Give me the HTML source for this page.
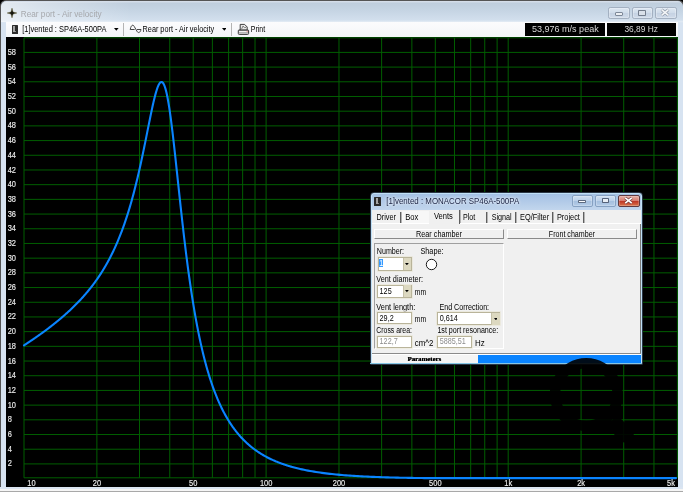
<!DOCTYPE html><html><head><meta charset="utf-8"><title>Rear port - Air velocity</title><style>html,body{margin:0;padding:0}body{width:683px;height:492px;overflow:hidden;position:relative;background:#000;font-family:"Liberation Sans",sans-serif}
#root{position:absolute;left:0;top:0;width:683px;height:492px;will-change:transform;}
.t{position:absolute;white-space:pre;line-height:1;transform-origin:0 0;}</style></head><body><div id="root">
<div style="position:absolute;left:0.00px;top:0.00px;width:684.00px;height:492.00px;box-sizing:border-box;border:1px solid #555;border-bottom:none;border-radius:6px 6px 0 0;background:linear-gradient(#d6dfea 0,#d3dce8 1px,#bfcedd 2px,#c6d5e4 10px,#d2dfed 19px,#e0e9f3 20.5px,#d7e3f1 22px,#d7e3f1 100%);"></div>
<div style="position:absolute;left:1.00px;top:1.50px;width:140.00px;height:20.00px;background:linear-gradient(to right,rgba(255,255,255,0.55),rgba(255,255,255,0.35) 40px,rgba(255,255,255,0) 130px);border-radius:5px 0 0 0"></div>
<div style="position:absolute;left:0.00px;top:487.00px;width:683.00px;height:2.00px;background:#dbe5f1"></div>
<div style="position:absolute;left:0.00px;top:489.00px;width:683.00px;height:2.20px;background:#f5f5f5"></div>
<div style="position:absolute;left:0.00px;top:491.20px;width:683.00px;height:0.80px;background:#a8a8a8"></div>
<svg style="position:absolute;left:7.1px;top:7.9px" width="10" height="10" viewBox="-5 -5 10 10"><path d="M0,-4.9 L1,-1 L4.9,0 L1,1 L0,4.9 L-1,1 L-4.9,0 L-1,-1Z" fill="#1b1b12" stroke="#5f5a2a" stroke-width="0.4"/><circle r="1.5" fill="#15150f"/></svg>
<span class="t" style="left:20px;top:9px;font-size:8.3px;color:#a6a8ac;transform:translate(0.70px,0.97px) scaleX(0.9923);">Rear port - Air velocity</span>
<div style="position:absolute;left:608.30px;top:7.20px;width:21.50px;height:12.30px;box-sizing:border-box;border:0.9px solid #a3b0c1;border-radius:2.2px;background:linear-gradient(#dde7f2,#d0dcea 48%,#c5d2e3 52%,#d0dbe9);box-shadow:0 0 0 0.6px rgba(255,255,255,0.45) inset;"></div><div style="position:absolute;left:614.80px;top:12.00px;width:8.30px;height:3.80px;box-sizing:border-box;border:0.9px solid #7d8898;background:#eceff3;border-radius:1px"></div>
<div style="position:absolute;left:631.80px;top:7.20px;width:21.30px;height:12.30px;box-sizing:border-box;border:0.9px solid #a3b0c1;border-radius:2.2px;background:linear-gradient(#dde7f2,#d0dcea 48%,#c5d2e3 52%,#d0dbe9);box-shadow:0 0 0 0.6px rgba(255,255,255,0.45) inset;"></div><div style="position:absolute;left:638.30px;top:9.70px;width:7.90px;height:5.90px;box-sizing:border-box;border:1.5px solid #737d8c;background:#d9e0e9;border-radius:0.9px"></div>
<div style="position:absolute;left:655.30px;top:7.20px;width:21.50px;height:12.30px;box-sizing:border-box;border:0.9px solid #a3b0c1;border-radius:2.2px;background:linear-gradient(#dde7f2,#d0dcea 48%,#c5d2e3 52%,#d0dbe9);box-shadow:0 0 0 0.6px rgba(255,255,255,0.45) inset;"></div><svg style="position:absolute;left:660.2px;top:8.15px" width="10" height="9" viewBox="0 0 10 9"><path d="M1.6,1.7 L8.4,7.3 M8.4,1.7 L1.6,7.3" stroke="#8e98a6" stroke-width="3"/><path d="M1.6,1.7 L8.4,7.3 M8.4,1.7 L1.6,7.3" stroke="#f4f6f8" stroke-width="1.6"/></svg>
<div style="position:absolute;left:6.00px;top:21.50px;width:671.80px;height:15.60px;background:linear-gradient(#fcfcfd,#f3f5f8);"></div>
<div style="position:absolute;left:11.90px;top:25.00px;width:6.10px;height:8.80px;background:#2c2c2c;border-radius:0.5px"><div style="position:absolute;left:1.10px;top:1.10px;width:1.90px;height:5.60px;background:#a4a4a4"></div><div style="position:absolute;left:3.50px;top:5.60px;width:1.00px;height:1.30px;background:#8a8a8a"></div></div>
<span class="t" style="left:22px;top:25px;font-size:8.3px;color:#000;transform:translate(0.20px,0.07px) scaleX(0.8962);">[1]vented : SP46A-500PA</span>
<svg style="position:absolute;left:114.3px;top:28.2px" width="4.6" height="3" viewBox="0 0 4.6 3"><path d="M0,0H4.6L2.3,2.8Z" fill="#000"/></svg>
<div style="position:absolute;left:123.30px;top:23.30px;width:0.80px;height:12.50px;background:#b4b4b4"></div>
<svg style="position:absolute;left:0;top:0" width="683" height="45" viewBox="0 0 683 45"><path d="M130.2,29.5 C131.2,24.6 133.2,24.2 134.3,26.6 L137.2,31.6 C138.2,33.2 140.2,33 141,29.5 M130.2,29.5 H134.6 M137,29.5 H141" fill="none" stroke="#3c3c3c" stroke-width="0.95" stroke-linejoin="round"/><path d="M240.2,29.8 V24.4 H244.6 L247.2,27 V29.8" fill="#e9e9e9" stroke="#2a2a2a" stroke-width="0.9"/><path d="M241.6,29 L243,26 L244.4,27.6 L246,27.4" fill="none" stroke="#666" stroke-width="0.8"/><rect x="238.3" y="29.9" width="10.3" height="4.5" rx="0.9" fill="#fff" stroke="#2a2a2a" stroke-width="0.95"/><path d="M239,32.9 H248" stroke="#777" stroke-width="0.9"/><path d="M239,30.6 H248" stroke="#444" stroke-width="0.7"/><rect x="246.6" y="30.9" width="1.2" height="0.9" fill="#f08080"/></svg>
<span class="t" style="left:142px;top:25px;font-size:8.3px;color:#000;transform:translate(0.60px,0.07px) scaleX(0.8760);">Rear port - Air velocity</span>
<svg style="position:absolute;left:221.6px;top:28.2px" width="4.6" height="3" viewBox="0 0 4.6 3"><path d="M0,0H4.6L2.3,2.8Z" fill="#000"/></svg>
<div style="position:absolute;left:231.20px;top:23.30px;width:0.80px;height:12.50px;background:#b4b4b4"></div>
<span class="t" style="left:250px;top:25px;font-size:8.3px;color:#000;transform:translate(0.80px,0.07px) scaleX(0.8440);">Print</span>
<div style="position:absolute;left:525.20px;top:23.20px;width:79.60px;height:12.40px;background:#000"></div>
<div style="position:absolute;left:607.10px;top:23.20px;width:68.60px;height:12.40px;background:#000"></div>
<span class="t" style="left:531px;top:25px;font-size:9px;color:#d8d8d8;transform:translate(0.90px,0.08px) scaleX(1.0038);">53,976 m/s peak</span>
<span class="t" style="left:624px;top:25px;font-size:9px;color:#d8d8d8;transform:translate(0.40px,0.08px) scaleX(0.9297);">36,89 Hz</span>
<div style="position:absolute;left:6.00px;top:37.00px;width:672.00px;height:450.00px;background:#000"></div>
<svg width="683" height="492" viewBox="0 0 683 492" style="position:absolute;left:0;top:0"><g stroke="#005e00" stroke-width="1.0" fill="none"><line x1="24.00" y1="37.8" x2="24.00" y2="477.8"/><line x1="96.88" y1="37.8" x2="96.88" y2="477.8"/><line x1="139.51" y1="37.8" x2="139.51" y2="477.8"/><line x1="169.76" y1="37.8" x2="169.76" y2="477.8"/><line x1="193.22" y1="37.8" x2="193.22" y2="477.8"/><line x1="212.39" y1="37.8" x2="212.39" y2="477.8"/><line x1="228.60" y1="37.8" x2="228.60" y2="477.8"/><line x1="242.64" y1="37.8" x2="242.64" y2="477.8"/><line x1="255.02" y1="37.8" x2="255.02" y2="477.8"/><line x1="266.10" y1="37.8" x2="266.10" y2="477.8"/><line x1="338.98" y1="37.8" x2="338.98" y2="477.8"/><line x1="381.61" y1="37.8" x2="381.61" y2="477.8"/><line x1="411.86" y1="37.8" x2="411.86" y2="477.8"/><line x1="435.32" y1="37.8" x2="435.32" y2="477.8"/><line x1="454.49" y1="37.8" x2="454.49" y2="477.8"/><line x1="470.70" y1="37.8" x2="470.70" y2="477.8"/><line x1="484.74" y1="37.8" x2="484.74" y2="477.8"/><line x1="497.12" y1="37.8" x2="497.12" y2="477.8"/><line x1="508.20" y1="37.8" x2="508.20" y2="477.8"/><line x1="581.08" y1="37.8" x2="581.08" y2="477.8"/><line x1="623.71" y1="37.8" x2="623.71" y2="477.8"/><line x1="653.96" y1="37.8" x2="653.96" y2="477.8"/><line x1="677.42" y1="37.8" x2="677.42" y2="477.8"/><line x1="24.00" y1="463.92" x2="677.42" y2="463.92"/><line x1="24.00" y1="449.22" x2="677.42" y2="449.22"/><line x1="24.00" y1="434.52" x2="677.42" y2="434.52"/><line x1="24.00" y1="419.82" x2="677.42" y2="419.82"/><line x1="24.00" y1="405.13" x2="677.42" y2="405.13"/><line x1="24.00" y1="390.43" x2="677.42" y2="390.43"/><line x1="24.00" y1="375.73" x2="677.42" y2="375.73"/><line x1="24.00" y1="361.04" x2="677.42" y2="361.04"/><line x1="24.00" y1="346.34" x2="677.42" y2="346.34"/><line x1="24.00" y1="331.64" x2="677.42" y2="331.64"/><line x1="24.00" y1="316.95" x2="677.42" y2="316.95"/><line x1="24.00" y1="302.25" x2="677.42" y2="302.25"/><line x1="24.00" y1="287.55" x2="677.42" y2="287.55"/><line x1="24.00" y1="272.85" x2="677.42" y2="272.85"/><line x1="24.00" y1="258.16" x2="677.42" y2="258.16"/><line x1="24.00" y1="243.46" x2="677.42" y2="243.46"/><line x1="24.00" y1="228.76" x2="677.42" y2="228.76"/><line x1="24.00" y1="214.07" x2="677.42" y2="214.07"/><line x1="24.00" y1="199.37" x2="677.42" y2="199.37"/><line x1="24.00" y1="184.67" x2="677.42" y2="184.67"/><line x1="24.00" y1="169.98" x2="677.42" y2="169.98"/><line x1="24.00" y1="155.28" x2="677.42" y2="155.28"/><line x1="24.00" y1="140.58" x2="677.42" y2="140.58"/><line x1="24.00" y1="125.88" x2="677.42" y2="125.88"/><line x1="24.00" y1="111.19" x2="677.42" y2="111.19"/><line x1="24.00" y1="96.49" x2="677.42" y2="96.49"/><line x1="24.00" y1="81.79" x2="677.42" y2="81.79"/><line x1="24.00" y1="67.10" x2="677.42" y2="67.10"/><line x1="24.00" y1="52.40" x2="677.42" y2="52.40"/><line x1="24.00" y1="37.8" x2="677.42" y2="37.8"/><line x1="24.00" y1="477.8" x2="677.42" y2="477.8"/></g><path d="M24.00,345.35 L24.50,345.03 L25.00,344.70 L25.50,344.38 L26.00,344.05 L26.50,343.72 L27.00,343.39 L27.50,343.06 L28.00,342.73 L28.50,342.40 L29.00,342.07 L29.50,341.74 L30.00,341.40 L30.50,341.07 L31.00,340.73 L31.50,340.39 L32.00,340.05 L32.50,339.71 L33.00,339.37 L33.50,339.03 L34.00,338.69 L34.50,338.35 L35.00,338.00 L35.50,337.65 L36.00,337.31 L36.50,336.96 L37.00,336.61 L37.50,336.26 L38.00,335.91 L38.50,335.55 L39.00,335.20 L39.50,334.84 L40.00,334.49 L40.50,334.13 L41.00,333.77 L41.50,333.41 L42.00,333.05 L42.50,332.69 L43.00,332.32 L43.50,331.96 L44.00,331.59 L44.50,331.22 L45.00,330.85 L45.50,330.48 L46.00,330.11 L46.50,329.73 L47.00,329.36 L47.50,328.98 L48.00,328.60 L48.50,328.22 L49.00,327.84 L49.50,327.46 L50.00,327.08 L50.50,326.69 L51.00,326.30 L51.50,325.92 L52.00,325.53 L52.50,325.13 L53.00,324.74 L53.50,324.34 L54.00,323.95 L54.50,323.55 L55.00,323.15 L55.50,322.75 L56.00,322.34 L56.50,321.94 L57.00,321.53 L57.50,321.12 L58.00,320.71 L58.50,320.29 L59.00,319.88 L59.50,319.46 L60.00,319.04 L60.50,318.62 L61.00,318.20 L61.50,317.77 L62.00,317.34 L62.50,316.91 L63.00,316.48 L63.50,316.05 L64.00,315.61 L64.50,315.17 L65.00,314.73 L65.50,314.29 L66.00,313.84 L66.50,313.39 L67.00,312.94 L67.50,312.49 L68.00,312.03 L68.50,311.57 L69.00,311.11 L69.50,310.65 L70.00,310.18 L70.50,309.71 L71.00,309.24 L71.50,308.77 L72.00,308.29 L72.50,307.81 L73.00,307.32 L73.50,306.84 L74.00,306.35 L74.50,305.85 L75.00,305.36 L75.50,304.86 L76.00,304.35 L76.50,303.85 L77.00,303.34 L77.50,302.82 L78.00,302.31 L78.50,301.79 L79.00,301.26 L79.50,300.74 L80.00,300.20 L80.50,299.67 L81.00,299.13 L81.50,298.59 L82.00,298.04 L82.50,297.49 L83.00,296.93 L83.50,296.37 L84.00,295.81 L84.50,295.24 L85.00,294.66 L85.50,294.08 L86.00,293.50 L86.50,292.91 L87.00,292.32 L87.50,291.72 L88.00,291.12 L88.50,290.51 L89.00,289.90 L89.50,289.28 L90.00,288.66 L90.50,288.03 L91.00,287.39 L91.50,286.75 L92.00,286.11 L92.50,285.45 L93.00,284.79 L93.50,284.13 L94.00,283.46 L94.50,282.78 L95.00,282.10 L95.50,281.40 L96.00,280.71 L96.50,280.00 L97.00,279.29 L97.50,278.57 L98.00,277.84 L98.50,277.11 L99.00,276.37 L99.50,275.62 L100.00,274.86 L100.50,274.09 L101.00,273.32 L101.50,272.54 L102.00,271.75 L102.50,270.95 L103.00,270.14 L103.50,269.32 L104.00,268.49 L104.50,267.65 L105.00,266.81 L105.50,265.95 L106.00,265.08 L106.50,264.21 L107.00,263.32 L107.50,262.42 L108.00,261.51 L108.50,260.59 L109.00,259.66 L109.50,258.71 L110.00,257.76 L110.50,256.79 L111.00,255.81 L111.50,254.82 L112.00,253.81 L112.50,252.79 L113.00,251.76 L113.50,250.71 L114.00,249.65 L114.50,248.58 L115.00,247.49 L115.50,246.38 L116.00,245.27 L116.50,244.13 L117.00,242.98 L117.50,241.81 L118.00,240.63 L118.50,239.43 L119.00,238.22 L119.50,236.98 L120.00,235.73 L120.50,234.46 L121.00,233.17 L121.50,231.86 L122.00,230.54 L122.50,229.19 L123.00,227.83 L123.50,226.44 L124.00,225.03 L124.50,223.61 L125.00,222.16 L125.50,220.69 L126.00,219.19 L126.50,217.68 L127.00,216.14 L127.50,214.58 L128.00,212.99 L128.50,211.38 L129.00,209.75 L129.50,208.09 L130.00,206.40 L130.50,204.69 L131.00,202.96 L131.50,201.19 L132.00,199.40 L132.50,197.59 L133.00,195.74 L133.50,193.87 L134.00,191.98 L134.50,190.05 L135.00,188.10 L135.50,186.11 L136.00,184.10 L136.50,182.06 L137.00,180.00 L137.50,177.90 L138.00,175.78 L138.50,173.62 L139.00,171.44 L139.50,169.24 L140.00,167.00 L140.50,164.74 L141.00,162.45 L141.50,160.14 L142.00,157.81 L142.50,155.45 L143.00,153.06 L143.50,150.66 L144.00,148.24 L144.50,145.80 L145.00,143.34 L145.50,140.87 L146.00,138.39 L146.50,135.89 L147.00,133.40 L147.50,130.90 L148.00,128.39 L148.50,125.90 L149.00,123.40 L149.50,120.93 L150.00,118.46 L150.50,116.02 L151.00,113.61 L151.50,111.22 L152.00,108.88 L152.50,106.58 L153.00,104.33 L153.50,102.14 L154.00,100.02 L154.50,97.97 L155.00,96.01 L155.50,94.13 L156.00,92.36 L156.50,90.69 L157.00,89.14 L157.50,87.72 L158.00,86.43 L158.50,85.29 L159.00,84.30 L159.50,83.48 L160.00,82.82 L160.50,82.35 L161.00,82.07 L161.50,81.98 L162.00,82.09 L162.50,82.40 L163.00,82.93 L163.50,83.68 L164.00,84.65 L164.50,85.83 L165.00,87.24 L165.50,88.87 L166.00,90.72 L166.50,92.78 L167.00,95.06 L167.50,97.55 L168.00,100.24 L168.50,103.13 L169.00,106.20 L169.50,109.46 L170.00,112.88 L170.50,116.47 L171.00,120.21 L171.50,124.08 L172.00,128.09 L172.50,132.21 L173.00,136.43 L173.50,140.75 L174.00,145.15 L174.50,149.63 L175.00,154.16 L175.50,158.74 L176.00,163.37 L176.50,168.02 L177.00,172.70 L177.50,177.38 L178.00,182.07 L178.50,186.76 L179.00,191.43 L179.50,196.09 L180.00,200.72 L180.50,205.32 L181.00,209.89 L181.50,214.42 L182.00,218.90 L182.50,223.33 L183.00,227.72 L183.50,232.05 L184.00,236.32 L184.50,240.54 L185.00,244.70 L185.50,248.79 L186.00,252.82 L186.50,256.78 L187.00,260.68 L187.50,264.52 L188.00,268.29 L188.50,271.99 L189.00,275.62 L189.50,279.19 L190.00,282.70 L190.50,286.14 L191.00,289.51 L191.50,292.82 L192.00,296.06 L192.50,299.25 L193.00,302.37 L193.50,305.43 L194.00,308.42 L194.50,311.36 L195.00,314.24 L195.50,317.07 L196.00,319.83 L196.50,322.54 L197.00,325.20 L197.50,327.80 L198.00,330.35 L198.50,332.85 L199.00,335.30 L199.50,337.70 L200.00,340.05 L200.50,342.36 L201.00,344.61 L201.50,346.83 L202.00,348.99 L202.50,351.12 L203.00,353.20 L203.50,355.24 L204.00,357.24 L204.50,359.20 L205.00,361.12 L205.50,363.01 L206.00,364.86 L206.50,366.67 L207.00,368.44 L207.50,370.19 L208.00,371.89 L208.50,373.57 L209.00,375.21 L209.50,376.82 L210.00,378.40 L210.50,379.95 L211.00,381.48 L211.50,382.97 L212.00,384.43 L212.50,385.87 L213.00,387.28 L213.50,388.66 L214.00,390.02 L214.50,391.36 L215.00,392.67 L215.50,393.95 L216.00,395.21 L216.50,396.45 L217.00,397.67 L217.50,398.86 L218.00,400.04 L218.50,401.19 L219.00,402.32 L219.50,403.44 L220.00,404.53 L220.50,405.60 L221.00,406.66 L221.50,407.69 L222.00,408.71 L222.50,409.71 L223.00,410.70 L223.50,411.67 L224.00,412.62 L224.50,413.55 L225.00,414.47 L225.50,415.37 L226.00,416.26 L226.50,417.14 L227.00,417.99 L227.50,418.84 L228.00,419.67 L228.50,420.49 L229.00,421.29 L229.50,422.08 L230.00,422.86 L230.50,423.63 L231.00,424.38 L231.50,425.12 L232.00,425.85 L232.50,426.57 L233.00,427.27 L233.50,427.97 L234.00,428.65 L234.50,429.33 L235.00,429.99 L235.50,430.64 L236.00,431.28 L236.50,431.92 L237.00,432.54 L237.50,433.15 L238.00,433.75 L238.50,434.35 L239.00,434.93 L239.50,435.51 L240.00,436.08 L240.50,436.64 L241.00,437.19 L241.50,437.73 L242.00,438.27 L242.50,438.79 L243.00,439.31 L243.50,439.82 L244.00,440.33 L244.50,440.82 L245.00,441.31 L245.50,441.79 L246.00,442.27 L246.50,442.74 L247.00,443.20 L247.50,443.65 L248.00,444.10 L248.50,444.54 L249.00,444.98 L249.50,445.41 L250.00,445.83 L250.50,446.24 L251.00,446.66 L251.50,447.06 L252.00,447.46 L252.50,447.85 L253.00,448.24 L253.50,448.63 L254.00,449.00 L254.50,449.38 L255.00,449.74 L255.50,450.10 L256.00,450.46 L256.50,450.81 L257.00,451.16 L257.50,451.50 L258.00,451.84 L258.50,452.17 L259.00,452.50 L259.50,452.83 L260.00,453.15 L260.50,453.46 L261.00,453.77 L261.50,454.08 L262.00,454.38 L262.50,454.68 L263.00,454.98 L263.50,455.27 L264.00,455.56 L264.50,455.84 L265.00,456.12 L265.50,456.40 L266.00,456.67 L266.50,456.94 L267.00,457.20 L267.50,457.46 L268.00,457.72 L268.50,457.98 L269.00,458.23 L269.50,458.48 L270.00,458.72 L270.50,458.96 L271.00,459.20 L271.50,459.44 L272.00,459.67 L272.50,459.90 L273.00,460.13 L273.50,460.35 L274.00,460.57 L274.50,460.79 L275.00,461.00 L275.50,461.22 L276.00,461.43 L276.50,461.63 L277.00,461.84 L277.50,462.04 L278.00,462.24 L278.50,462.43 L279.00,462.63 L279.50,462.82 L280.00,463.01 L280.50,463.20 L281.00,463.38 L281.50,463.56 L282.00,463.74 L282.50,463.92 L283.00,464.10 L283.50,464.27 L284.00,464.44 L284.50,464.61 L285.00,464.78 L285.50,464.94 L286.00,465.11 L286.50,465.27 L287.00,465.43 L287.50,465.58 L288.00,465.74 L288.50,465.89 L289.00,466.04 L289.50,466.19 L290.00,466.34 L290.50,466.48 L291.00,466.63 L291.50,466.77 L292.00,466.91 L292.50,467.05 L293.00,467.19 L293.50,467.32 L294.00,467.46 L294.50,467.59 L295.00,467.72 L295.50,467.85 L296.00,467.97 L296.50,468.10 L297.00,468.22 L297.50,468.35 L298.00,468.47 L298.50,468.59 L299.00,468.71 L299.50,468.82 L300.00,468.94 L302.00,469.39 L304.00,469.81 L306.00,470.22 L308.00,470.61 L310.00,470.98 L312.00,471.33 L314.00,471.66 L316.00,471.98 L318.00,472.29 L320.00,472.58 L322.00,472.86 L324.00,473.12 L326.00,473.37 L328.00,473.61 L330.00,473.84 L332.00,474.06 L334.00,474.27 L336.00,474.47 L338.00,474.66 L340.00,474.84 L342.00,475.01 L344.00,475.18 L346.00,475.34 L348.00,475.49 L350.00,475.63 L352.00,475.77 L354.00,475.90 L356.00,476.02 L358.00,476.14 L360.00,476.25 L362.00,476.36 L364.00,476.47 L366.00,476.56 L368.00,476.66 L370.00,476.75 L372.00,476.83 L374.00,476.92 L376.00,476.99 L378.00,477.07 L380.00,477.14 L382.00,477.21 L384.00,477.27 L386.00,477.33 L388.00,477.39 L390.00,477.45 L392.00,477.50 L394.00,477.55 L396.00,477.60 L398.00,477.65 L400.00,477.69 L402.00,477.73 L404.00,477.77 L406.00,477.81 L408.00,477.85 L410.00,477.89 L412.00,477.92 L414.00,477.95 L416.00,477.98 L418.00,478.01 L420.00,478.04 L422.00,478.06 L424.00,478.09 L426.00,478.10 L428.00,478.10 L430.00,478.10 L432.00,478.10 L434.00,478.10 L436.00,478.10 L438.00,478.10 L440.00,478.10 L442.00,478.10 L444.00,478.10 L446.00,478.10 L448.00,478.10 L450.00,478.10 L452.00,478.10 L454.00,478.10 L456.00,478.10 L458.00,478.10 L460.00,478.10 L462.00,478.10 L464.00,478.10 L466.00,478.10 L468.00,478.10 L470.00,478.10 L472.00,478.10 L474.00,478.10 L476.00,478.10 L478.00,478.10 L480.00,478.10 L482.00,478.10 L484.00,478.10 L486.00,478.10 L488.00,478.10 L490.00,478.10 L492.00,478.10 L494.00,478.10 L496.00,478.10 L498.00,478.10 L500.00,478.10 L502.00,478.10 L504.00,478.10 L506.00,478.10 L508.00,478.10 L510.00,478.10 L512.00,478.10 L514.00,478.10 L516.00,478.10 L518.00,478.10 L520.00,478.10 L522.00,478.10 L524.00,478.10 L526.00,478.10 L528.00,478.10 L530.00,478.10 L532.00,478.10 L534.00,478.10 L536.00,478.10 L538.00,478.10 L540.00,478.10 L542.00,478.10 L544.00,478.10 L546.00,478.10 L548.00,478.10 L550.00,478.10 L552.00,478.10 L554.00,478.10 L556.00,478.10 L558.00,478.10 L560.00,478.10 L562.00,478.10 L564.00,478.10 L566.00,478.10 L568.00,478.10 L570.00,478.10 L572.00,478.10 L574.00,478.10 L576.00,478.10 L578.00,478.10 L580.00,478.10 L582.00,478.10 L584.00,478.10 L586.00,478.10 L588.00,478.10 L590.00,478.10 L592.00,478.10 L594.00,478.10 L596.00,478.10 L598.00,478.10 L600.00,478.10 L602.00,478.10 L604.00,478.10 L606.00,478.10 L608.00,478.10 L610.00,478.10 L612.00,478.10 L614.00,478.10 L616.00,478.10 L618.00,478.10 L620.00,478.10 L622.00,478.10 L624.00,478.10 L626.00,478.10 L628.00,478.10 L630.00,478.10 L632.00,478.10 L634.00,478.10 L636.00,478.10 L638.00,478.10 L640.00,478.10 L642.00,478.10 L644.00,478.10 L646.00,478.10 L648.00,478.10 L650.00,478.10 L652.00,478.10 L654.00,478.10 L656.00,478.10 L658.00,478.10 L660.00,478.10 L662.00,478.10 L664.00,478.10 L666.00,478.10 L668.00,478.10 L670.00,478.10 L672.00,478.10 L674.00,478.10 L676.00,478.10" fill="none" stroke="#0a84ff" stroke-width="2.1" stroke-linejoin="round" stroke-linecap="round"/><g fill="#ececec" stroke="#ececec" stroke-width="0.15" font-family="Liberation Sans, sans-serif" font-size="9"><text transform="translate(7.7,466.4) scale(0.83,1)">2</text><text transform="translate(7.7,451.7) scale(0.83,1)">4</text><text transform="translate(7.7,437.0) scale(0.83,1)">6</text><text transform="translate(7.7,422.3) scale(0.83,1)">8</text><text transform="translate(7.7,407.6) scale(0.83,1)">10</text><text transform="translate(7.7,392.9) scale(0.83,1)">12</text><text transform="translate(7.7,378.2) scale(0.83,1)">14</text><text transform="translate(7.7,363.5) scale(0.83,1)">16</text><text transform="translate(7.7,348.8) scale(0.83,1)">18</text><text transform="translate(7.7,334.1) scale(0.83,1)">20</text><text transform="translate(7.7,319.4) scale(0.83,1)">22</text><text transform="translate(7.7,304.7) scale(0.83,1)">24</text><text transform="translate(7.7,290.1) scale(0.83,1)">26</text><text transform="translate(7.7,275.4) scale(0.83,1)">28</text><text transform="translate(7.7,260.7) scale(0.83,1)">30</text><text transform="translate(7.7,246.0) scale(0.83,1)">32</text><text transform="translate(7.7,231.3) scale(0.83,1)">34</text><text transform="translate(7.7,216.6) scale(0.83,1)">36</text><text transform="translate(7.7,201.9) scale(0.83,1)">38</text><text transform="translate(7.7,187.2) scale(0.83,1)">40</text><text transform="translate(7.7,172.5) scale(0.83,1)">42</text><text transform="translate(7.7,157.8) scale(0.83,1)">44</text><text transform="translate(7.7,143.1) scale(0.83,1)">46</text><text transform="translate(7.7,128.4) scale(0.83,1)">48</text><text transform="translate(7.7,113.7) scale(0.83,1)">50</text><text transform="translate(7.7,99.0) scale(0.83,1)">52</text><text transform="translate(7.7,84.3) scale(0.83,1)">54</text><text transform="translate(7.7,69.6) scale(0.83,1)">56</text><text transform="translate(7.7,54.9) scale(0.83,1)">58</text><text transform="translate(31.5,486) scale(0.83,1)" text-anchor="middle">10</text><text transform="translate(96.9,486) scale(0.83,1)" text-anchor="middle">20</text><text transform="translate(193.2,486) scale(0.83,1)" text-anchor="middle">50</text><text transform="translate(266.1,486) scale(0.83,1)" text-anchor="middle">100</text><text transform="translate(339.0,486) scale(0.83,1)" text-anchor="middle">200</text><text transform="translate(435.3,486) scale(0.83,1)" text-anchor="middle">500</text><text transform="translate(508.2,486) scale(0.83,1)" text-anchor="middle">1k</text><text transform="translate(581.1,486) scale(0.83,1)" text-anchor="middle">2k</text><text transform="translate(675,486) scale(0.83,1)" text-anchor="end">5k</text></g></svg>
<div id="dlg">
<div style="position:absolute;left:369.80px;top:191.90px;width:272.90px;height:172.70px;box-sizing:border-box;border:0.6px solid #2b3645;border-radius:3.8px 3.8px 1px 1px;background:linear-gradient(#a2c0e4 0,#b3cbe8 9px,#c2d6ed 17px,#d3e2f3 19px,#dbe7f5 100%);box-shadow:0 0 0 1px #bfe0f6 inset;"></div>
<div style="position:absolute;left:370.40px;top:363.10px;width:271.70px;height:0.90px;background:#86c6e4"></div>
<div style="position:absolute;left:372.00px;top:209.60px;width:269.00px;height:153.20px;background:#f0f0f0"></div>
<div style="position:absolute;left:374.30px;top:196.50px;width:6.80px;height:9.60px;background:#2a2a2a;border-radius:0.5px"><div style="position:absolute;left:1.30px;top:1.20px;width:2.10px;height:6.00px;background:#a4a4a4"></div><div style="position:absolute;left:3.80px;top:6.10px;width:1.20px;height:1.40px;background:#8a8a8a"></div></div>
<span class="t" style="left:386px;top:197px;font-size:8.3px;color:#1a2242;transform:translate(0.20px,0.17px) scaleX(0.9529);text-shadow:0 0 2.5px rgba(255,255,255,0.9),0 0 4px rgba(255,255,255,0.7);">[1]vented : MONACOR SP46A-500PA</span>
<div style="position:absolute;left:571.90px;top:195.30px;width:20.80px;height:12.20px;box-sizing:border-box;border:0.9px solid #86a1c2;border-radius:2px;background:linear-gradient(#cfdff1,#bcd1ea 45%,#a5c0df 55%,#b4cce7);box-shadow:0 0 0 0.6px rgba(255,255,255,0.4) inset;"></div><div style="position:absolute;left:578.20px;top:200.30px;width:8.20px;height:3.10px;box-sizing:border-box;border:0.8px solid #5c6a80;background:#fbfcfd;border-radius:0.8px"></div>
<div style="position:absolute;left:594.50px;top:195.30px;width:21.50px;height:12.20px;box-sizing:border-box;border:0.9px solid #86a1c2;border-radius:2px;background:linear-gradient(#cfdff1,#bcd1ea 45%,#a5c0df 55%,#b4cce7);box-shadow:0 0 0 0.6px rgba(255,255,255,0.4) inset;"></div><div style="position:absolute;left:601.75px;top:198.30px;width:7.00px;height:5.00px;box-sizing:border-box;border:1.5px solid #55627a;background:#e8eef5;border-radius:0.8px"></div>
<div style="position:absolute;left:618.00px;top:195.30px;width:21.70px;height:12.20px;box-sizing:border-box;border:0.9px solid #5f3a40;border-radius:2px;background:linear-gradient(#e6b0a6,#d77e72 45%,#c03a27 55%,#d2603f 85%,#dc8a62);box-shadow:0 0 0 0.6px rgba(255,255,255,0.35) inset;"></div><svg style="position:absolute;left:624.35px;top:196.4px" width="9" height="9" viewBox="0 0 9 9"><path d="M1.3,1.9 L7.7,7.1 M7.7,1.9 L1.3,7.1" stroke="#6a3a3a" stroke-width="3"/><path d="M1.3,1.9 L7.7,7.1 M7.7,1.9 L1.3,7.1" stroke="#fff" stroke-width="1.7"/></svg>
<div style="position:absolute;left:401.50px;top:211.00px;width:27.30px;height:12.40px;background:#f7f7f7"></div>
<span class="t" style="left:376px;top:213px;font-size:8.3px;color:#000;transform:translate(0.50px,0.37px) scaleX(0.8814);">Driver</span>
<div style="position:absolute;left:400.05px;top:211.50px;width:0.90px;height:11.30px;background:#5e5e5e"></div><div style="position:absolute;left:400.95px;top:211.50px;width:0.80px;height:11.30px;background:#b4b4b4"></div>
<span class="t" style="left:405px;top:213px;font-size:8.3px;color:#000;transform:translate(0.30px,0.37px) scaleX(0.9163);">Box</span>
<span class="t" style="left:433px;top:211px;font-size:8.3px;color:#000;transform:translate(0.90px,0.87px) scaleX(0.9102);">Vents</span>
<div style="position:absolute;left:458.75px;top:210.10px;width:0.90px;height:13.70px;background:#5e5e5e"></div><div style="position:absolute;left:459.65px;top:210.10px;width:0.80px;height:13.70px;background:#b4b4b4"></div>
<span class="t" style="left:463px;top:213px;font-size:8.3px;color:#000;transform:translate(0.00px,0.37px) scaleX(0.8533);">Plot</span>
<div style="position:absolute;left:486.45px;top:211.50px;width:0.90px;height:11.30px;background:#5e5e5e"></div><div style="position:absolute;left:487.35px;top:211.50px;width:0.80px;height:11.30px;background:#b4b4b4"></div>
<span class="t" style="left:491px;top:213px;font-size:8.3px;color:#000;transform:translate(0.70px,0.37px) scaleX(0.8666);">Signal</span>
<div style="position:absolute;left:514.75px;top:211.50px;width:0.90px;height:11.30px;background:#5e5e5e"></div><div style="position:absolute;left:515.65px;top:211.50px;width:0.80px;height:11.30px;background:#b4b4b4"></div>
<span class="t" style="left:520px;top:213px;font-size:8.3px;color:#000;transform:translate(0.00px,0.37px) scaleX(0.8920);">EQ/Filter</span>
<div style="position:absolute;left:552.05px;top:211.50px;width:0.90px;height:11.30px;background:#5e5e5e"></div><div style="position:absolute;left:552.95px;top:211.50px;width:0.80px;height:11.30px;background:#b4b4b4"></div>
<span class="t" style="left:556px;top:213px;font-size:8.3px;color:#000;transform:translate(0.90px,0.37px) scaleX(0.8905);">Project</span>
<div style="position:absolute;left:583.15px;top:211.50px;width:0.90px;height:11.30px;background:#5e5e5e"></div><div style="position:absolute;left:584.05px;top:211.50px;width:0.80px;height:11.30px;background:#b4b4b4"></div>
<div style="position:absolute;left:372.00px;top:223.40px;width:56.80px;height:0.80px;background:#fff"></div>
<div style="position:absolute;left:460.00px;top:223.40px;width:180.60px;height:0.80px;background:#fff"></div>
<div style="position:absolute;left:640.20px;top:223.60px;width:0.90px;height:130.00px;background:#7a7a7a"></div>
<div style="position:absolute;left:372.00px;top:352.70px;width:269.00px;height:1.00px;background:#8a8a8a"></div>
<div style="position:absolute;left:372.00px;top:353.70px;width:269.00px;height:0.80px;background:#fff"></div>
<div style="position:absolute;left:374.10px;top:229.10px;width:129.80px;height:10.30px;box-sizing:border-box;background:#f0f0f0;border-top:0.8px solid #fff;border-left:0.8px solid #fff;border-right:0.8px solid #8a8a8a;border-bottom:0.8px solid #8a8a8a;"></div><span class="t" style="left:415px;top:230px;font-size:8.3px;color:#000;transform:translate(0.95px,0.47px) scaleX(0.8768);">Rear chamber</span>
<div style="position:absolute;left:507.00px;top:229.10px;width:129.80px;height:10.30px;box-sizing:border-box;background:#f0f0f0;border-top:0.8px solid #fff;border-left:0.8px solid #fff;border-right:0.8px solid #8a8a8a;border-bottom:0.8px solid #8a8a8a;"></div><span class="t" style="left:548px;top:230px;font-size:8.3px;color:#000;transform:translate(0.85px,0.47px) scaleX(0.8544);">Front chamber</span>
<div style="position:absolute;left:374.30px;top:242.90px;width:129.60px;height:106.20px;box-sizing:border-box;border-top:0.8px solid #a0a0a0;border-left:0.8px solid #a0a0a0;border-right:0.8px solid #fff;border-bottom:0.8px solid #fff;"></div>
<span class="t" style="left:376px;top:247px;font-size:8.3px;color:#000;transform:translate(0.80px,0.47px) scaleX(0.8577);">Number:</span>
<span class="t" style="left:420px;top:247px;font-size:8.3px;color:#000;transform:translate(0.40px,0.47px) scaleX(0.8822);">Shape:</span>
<div style="position:absolute;left:377.50px;top:257.00px;width:34.40px;height:13.60px;box-sizing:border-box;background:#fff;border:0.9px solid #b9b49a;box-shadow:0 0 0 0.7px #e8e5d6;"></div><div style="position:absolute;left:402.90px;top:257.80px;width:8.40px;height:12.00px;background:#dcd8c0;border-left:0.6px solid #c5c1a8;box-sizing:border-box"></div><svg style="position:absolute;left:405.20px;top:262.90px" width="3.8" height="2.4" viewBox="0 0 3.8 2.4"><path d="M0,0H3.8L1.9,2.3Z" fill="#000"/></svg><div style="position:absolute;left:379.40px;top:259.20px;width:4.10px;height:8.20px;background:#3399ff"></div><span class="t" style="left:379px;top:259px;font-size:8.3px;color:#fff;transform:translate(0.30px,0.37px) scaleX(0.8700);">1</span>
<svg style="position:absolute;left:424.8px;top:258.2px" width="13" height="13" viewBox="0 0 13 13"><circle cx="6.5" cy="6.5" r="5.2" fill="#fff" stroke="#000" stroke-width="0.9"/></svg>
<span class="t" style="left:376px;top:274px;font-size:8.3px;color:#000;transform:translate(0.30px,0.77px) scaleX(0.8745);">Vent diameter:</span>
<div style="position:absolute;left:377.20px;top:284.50px;width:34.90px;height:13.30px;box-sizing:border-box;background:#fff;border:0.9px solid #b9b49a;box-shadow:0 0 0 0.7px #e8e5d6;"></div><div style="position:absolute;left:403.10px;top:285.30px;width:8.40px;height:11.70px;background:#dcd8c0;border-left:0.6px solid #c5c1a8;box-sizing:border-box"></div><svg style="position:absolute;left:405.40px;top:290.25px" width="3.8" height="2.4" viewBox="0 0 3.8 2.4"><path d="M0,0H3.8L1.9,2.3Z" fill="#000"/></svg><span class="t" style="left:379px;top:286px;font-size:8.3px;color:#000;transform:translate(0.60px,0.57px) scaleX(0.8700);">125</span>
<span class="t" style="left:414px;top:287px;font-size:8.3px;color:#000;transform:translate(0.80px,0.67px) scaleX(0.8244);">mm</span>
<span class="t" style="left:376px;top:302px;font-size:8.3px;color:#000;transform:translate(0.30px,0.67px) scaleX(0.8898);">Vent length:</span>
<span class="t" style="left:439px;top:302px;font-size:8.3px;color:#000;transform:translate(0.40px,0.67px) scaleX(0.8620);">End Correction:</span>
<div style="position:absolute;left:377.20px;top:311.70px;width:34.90px;height:12.30px;box-sizing:border-box;background:#fff;border:0.9px solid #b9b49a;box-shadow:0 0 0 0.7px #e8e5d6;"></div><span class="t" style="left:379px;top:313px;font-size:8.3px;color:#000;transform:translate(0.60px,0.57px) scaleX(0.8700);">29,2</span>
<span class="t" style="left:414px;top:314px;font-size:8.3px;color:#000;transform:translate(0.80px,0.97px) scaleX(0.8244);">mm</span>
<div style="position:absolute;left:437.30px;top:311.70px;width:62.90px;height:13.80px;box-sizing:border-box;background:#fff;border:0.9px solid #b9b49a;box-shadow:0 0 0 0.7px #e8e5d6;"></div><div style="position:absolute;left:491.20px;top:312.50px;width:8.40px;height:12.20px;background:#dcd8c0;border-left:0.6px solid #c5c1a8;box-sizing:border-box"></div><svg style="position:absolute;left:493.50px;top:317.70px" width="3.8" height="2.4" viewBox="0 0 3.8 2.4"><path d="M0,0H3.8L1.9,2.3Z" fill="#000"/></svg><span class="t" style="left:439px;top:314px;font-size:8.3px;color:#000;transform:translate(0.70px,0.27px) scaleX(0.8700);">0,614</span>
<span class="t" style="left:376px;top:326px;font-size:8.3px;color:#000;transform:translate(0.30px,0.27px) scaleX(0.8300);">Cross area:</span>
<span class="t" style="left:437px;top:326px;font-size:8.3px;color:#000;transform:translate(0.40px,0.27px) scaleX(0.8574);">1st port resonance:</span>
<div style="position:absolute;left:377.20px;top:335.70px;width:34.90px;height:11.90px;box-sizing:border-box;background:#fff;border:0.9px solid #b9b49a;box-shadow:0 0 0 0.7px #e8e5d6;"></div><span class="t" style="left:379px;top:337px;font-size:8.3px;color:#8c8c8c;transform:translate(0.60px,0.17px) scaleX(0.8700);">122,7</span>
<span class="t" style="left:414px;top:338px;font-size:8.3px;color:#000;transform:translate(0.80px,0.67px) scaleX(0.9500);">cm^2</span>
<div style="position:absolute;left:437.30px;top:335.70px;width:35.20px;height:11.90px;box-sizing:border-box;background:#fff;border:0.9px solid #b9b49a;box-shadow:0 0 0 0.7px #e8e5d6;"></div><span class="t" style="left:439px;top:337px;font-size:8.3px;color:#8c8c8c;transform:translate(0.70px,0.17px) scaleX(0.8700);">5885,51</span>
<span class="t" style="left:474px;top:338px;font-size:8.3px;color:#000;transform:translate(0.90px,0.67px) scaleX(0.9565);">Hz</span>
<div style="position:absolute;left:372.00px;top:354.50px;width:269.00px;height:8.40px;background:#f4f4f4"></div>
<div style="position:absolute;left:477.70px;top:355.30px;width:163.30px;height:7.50px;background:#0a84ff"></div>
<span class="t" style="left:407px;top:355px;font-size:6px;color:#000;transform:translate(0.40px,0.62px) scaleX(1.1364);font-family:'Liberation Serif',serif;font-weight:bold;text-shadow:0.3px 0 0 #000;">Parameters</span>
</div>
<svg width="683" height="492" viewBox="0 0 683 492" style="position:absolute;left:0;top:0;z-index:50"><path opacity="0.9" fill="#000" fill-rule="evenodd" d="M586.3,358 a36.5,36.5 0 1 0 0.01,0 Z M586.3,368.3 a26.2,26.2 0 1 1 -0.01,0 Z"/><path opacity="0.9" d="M612.0,421.0 L625.9,434.9" stroke="#000" stroke-width="15.8" stroke-linecap="round" fill="none" clip-path="url(#hc)"/><defs><clipPath id="hc"><path clip-rule="evenodd" d="M0,0H683V492H0Z M586.3,358 a36.5,36.5 0 1 0 0.01,0 Z"/></clipPath></defs></svg>
</div></body></html>
